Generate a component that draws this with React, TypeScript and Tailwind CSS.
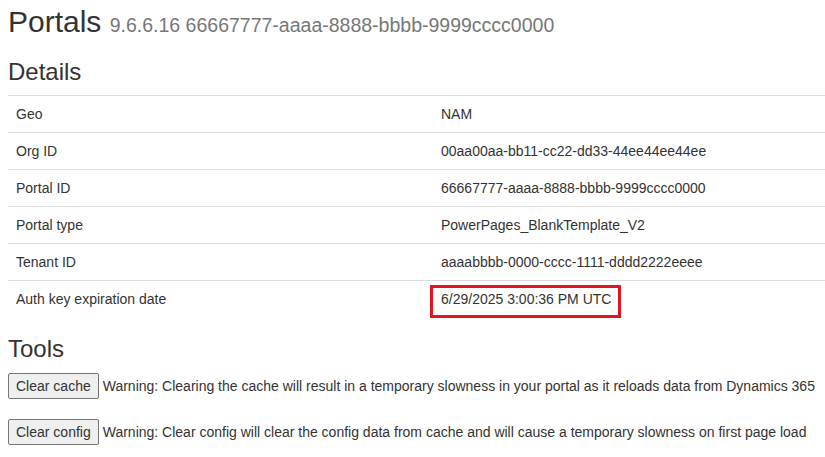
import React from "react";

const details: [string, string][] = [
  ["Geo", "NAM"],
  ["Org ID", "00aa00aa-bb11-cc22-dd33-44ee44ee44ee"],
  ["Portal ID", "66667777-aaaa-8888-bbbb-9999cccc0000"],
  ["Portal type", "PowerPages_BlankTemplate_V2"],
  ["Tenant ID", "aaaabbbb-0000-cccc-1111-dddd2222eeee"],
];

export default function App() {
  return (
    <div
      className="min-h-[457px] bg-white pl-[8px] text-[#333] text-[14px] leading-[20px]"
      style={{ fontFamily: '"Liberation Sans", Arial, Helvetica, sans-serif' }}
    >
      <h1 className="h-[38px] pt-[5px] text-[30px] leading-[33px] font-normal">
        Portals{" "}
        <small className="text-[19.5px] leading-none text-[#777]">
          9.6.6.16 66667777-aaaa-8888-bbbb-9999cccc0000
        </small>
      </h1>

      <h3 className="mt-[21px] text-[24px] leading-[26px] font-normal">Details</h3>

      <table className="mt-[10px] w-[817px] border-collapse">
        <tbody>
          {details.map(([label, value]) => (
            <tr key={label} className="border-t border-[#ddd]">
              <td className="w-[425px] px-[8px] py-[8px] align-top">{label}</td>
              <td className="px-[8px] py-[8px] align-top">{value}</td>
            </tr>
          ))}
          <tr className="border-t border-[#ddd]">
            <td className="w-[425px] px-[8px] py-[8px] align-top">Auth key expiration date</td>
            <td className="px-[8px] py-[8px] align-top">
              <span className="relative inline-block">
                6/29/2025 3:00:36 PM UTC
                {/* red highlight box drawn over the value */}
                <span className="absolute left-[-11px] top-[-4px] h-[33px] w-[191px] border-[3px] border-[#e3141e]" />
              </span>
            </td>
          </tr>
        </tbody>
      </table>

      <h3 className="mt-[19px] text-[24px] leading-[26px] font-normal">Tools</h3>

      <div className="mt-[11px] flex flex-col gap-[20px]">
        <div className="flex items-center">
          <button className="h-[26px] rounded-[2px] border border-[#767676] bg-[#efefef] px-[7px] text-[14px] text-[#333]">
            Clear cache
          </button>
          <span className="ml-[4px]">
            Warning: Clearing the cache will result in a temporary slowness in your portal as it reloads data from Dynamics 365
          </span>
        </div>
        <div className="flex items-center">
          <button className="h-[26px] rounded-[2px] border border-[#767676] bg-[#efefef] px-[7px] text-[14px] text-[#333]">
            Clear config
          </button>
          <span className="ml-[4px]">
            Warning: Clear config will clear the config data from cache and will cause a temporary slowness on first page load
          </span>
        </div>
      </div>
    </div>
  );
}
